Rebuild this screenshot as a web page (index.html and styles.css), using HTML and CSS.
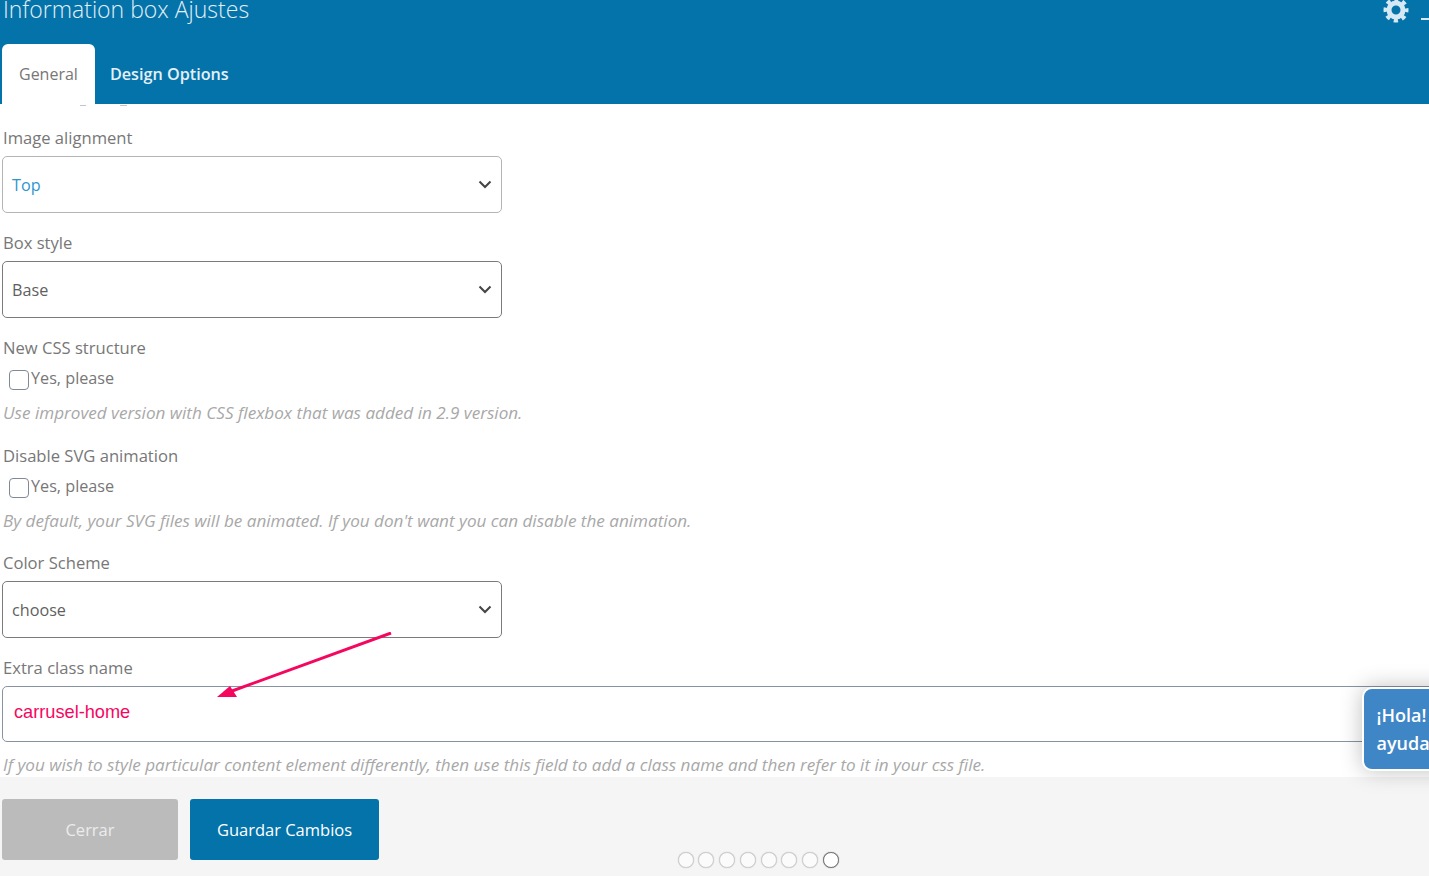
FILE: index.html
```html
<!DOCTYPE html>
<html lang="es">
<head>
<meta charset="utf-8">
<title>Information box Ajustes</title>
<link rel="stylesheet" href="styles.css">
</head>
<body>
<div class="panel">
  <header class="head">
    <div class="title-row">
      <h1 class="title">Information box Ajustes</h1>
      <div class="head-icons">
        <svg class="gear" width="26" height="26" viewBox="0 0 26 26"><circle cx="13" cy="13" r="7" fill="none" stroke="#d5e8f3" stroke-width="5"/><circle cx="13" cy="13" r="10.500" fill="none" stroke="#d5e8f3" stroke-width="4" stroke-dasharray="4.250 4" stroke-dashoffset="2.100"/></svg>
        <span class="minimize"></span>
      </div>
    </div>
    <nav class="tabs">
      <a class="tab tab-active">General</a>
      <a class="tab tab-plain">Design Options</a>
    </nav>
  </header>
  <main class="form">
    <div class="field">
      <label class="label">Image alignment</label>
      <div class="select select-blue"><span>Top</span><svg class="chev" width="14" height="9" viewBox="0 0 14 9"><path d="M1.500 1.500 7 7l5.500-5.500" fill="none" stroke="#444" stroke-width="2"/></svg></div>
    </div>
    <div class="field">
      <label class="label">Box style</label>
      <div class="select select-dark"><span>Base</span><svg class="chev" width="14" height="9" viewBox="0 0 14 9"><path d="M1.500 1.500 7 7l5.500-5.500" fill="none" stroke="#444" stroke-width="2"/></svg></div>
    </div>
    <div class="field">
      <label class="label">New CSS structure</label>
      <div class="check-row"><span class="check"></span><span>Yes, please</span></div>
      <p class="help">Use improved version with CSS flexbox that was added in 2.9 version.</p>
    </div>
    <div class="field">
      <label class="label">Disable SVG animation</label>
      <div class="check-row"><span class="check"></span><span>Yes, please</span></div>
      <p class="help">By default, your SVG files will be animated. If you don't want you can disable the animation.</p>
    </div>
    <div class="field">
      <label class="label">Color Scheme</label>
      <div class="select select-dark"><span>choose</span><svg class="chev" width="14" height="9" viewBox="0 0 14 9"><path d="M1.500 1.500 7 7l5.500-5.500" fill="none" stroke="#444" stroke-width="2"/></svg></div>
    </div>
    <div class="field field-last">
      <label class="label">Extra class name</label>
      <div class="text-input">carrusel-home</div>
      <p class="help">If you wish to style particular content element differently, then use this field to add a class name and then refer to it in your css file.</p>
    </div>
  </main>
  <footer class="foot">
    <button class="btn btn-close">Cerrar</button>
    <button class="btn btn-save">Guardar Cambios</button>
  </footer>
</div>
<svg class="arrow" width="190" height="80" viewBox="0 0 190 80"><path d="M175 1 16 59" stroke="#f5075f" stroke-width="3" fill="none"/><path d="M1 65 14 54 21 65z" fill="#f5075f"/></svg>
<div class="bubble"><div>¡Hola!</div><div>ayudar</div></div>
<div class="dots"><i class="dot"></i><i class="dot"></i><i class="dot"></i><i class="dot"></i><i class="dot"></i><i class="dot"></i><i class="dot"></i><i class="dot dot-on"></i></div>
</body>
</html>
```
FILE: styles.css
```css
html, body { margin: 0; padding: 0; height: 100%; overflow: hidden; background: #fff; }
body { font-family: "Open Sans", "Noto Sans", sans-serif; color: #777; font-size: 16px; }
.panel { display: flex; flex-direction: column; height: 876px; }
.head { background: #0473aa; height: 104px; flex: none; padding-left: 2px; display: flex; flex-direction: column; }
.title-row { display: flex; justify-content: space-between; height: 44px; }
.title { margin: -2px 0 0 1px; font-size: 23px; font-weight: 300; line-height: 22px; color: #e2eff6; white-space: nowrap; }
.head-icons { display: flex; align-items: flex-start; margin-top: -3px; }
.gear { margin-right: 12px; }
.minimize { width: 8px; height: 2px; background: #d5e8f3; margin-top: 21px; }
.tabs { display: flex; }
.tab { height: 60px; line-height: 61px; padding: 0 17px; font-size: 16px; color: #dcecf5; border-radius: 6px 6px 0 0; }
.tab-active { background: #fff; color: #777; }
.tab-plain { padding-left: 15px; font-size: 16.200px; font-weight: 600; color: #e4f0f7; }
.form { flex: 1; padding: 23px 0 0 2px; position: relative; }
.form::before, .form::after { content: ""; position: absolute; top: 1px; height: 1px; background: #c4c4c4; }
.form::before { left: 80px; width: 6px; }
.form::after { left: 120px; width: 7px; }
.field { margin-bottom: 19px; }
.field-last { margin-bottom: 0; }
.label { display: block; font-size: 16.600px; line-height: 22px; margin: 0 0 7px 1px; color: #777; white-space: nowrap; }
.select { width: 500px; height: 57px; box-sizing: border-box; border: 1px solid #b4b4b4; border-radius: 5px; display: flex; align-items: center; justify-content: space-between; padding: 0 9px 0 9px; color: #5f5f5f; font-size: 16.200px; }
.select-blue { color: #2f95cf; }
.select-dark { border-color: #7b7b7b; }
.check-row { display: flex; align-items: flex-start; padding-left: 7px; height: 24px; line-height: 20px; margin-top: 9px; color: #777; font-size: 16.200px; }
.check { width: 18px; height: 18px; border: 1px solid #7f8a96; border-radius: 4px; margin: 2px 2px 0 0; background: #fff; flex: none; }
.help { margin: 10px 0 20.500px 1px; font-style: italic; font-size: 17.100px; line-height: 22px; color: #a8a8a8; white-space: nowrap; }
.text-input { width: 1440px; height: 56px; box-sizing: border-box; border: 1px solid #8793a0; border-radius: 5px; padding: 0 11px; line-height: 50px; font-family: "Liberation Sans", Arial, sans-serif; font-size: 18.200px; color: #f5075f; }
.text-input + .help { margin: 12px 0 0 1px; }
.foot { flex: none; height: 99px; background: #f5f5f5; display: flex; align-items: flex-start; gap: 12px; padding: 22px 0 0 2px; box-sizing: border-box; }
.btn { height: 61px; border: 0; border-radius: 3px; font: 16.500px "Open Sans", "Noto Sans", sans-serif; color: #fff; }
.btn-close { width: 176px; background: #bbb; color: #ececec; }
.btn-save { width: 189px; background: #0473aa; }
.arrow { position: absolute; left: 216px; top: 632px; }
.bubble { position: absolute; left: 1362px; top: 687px; width: 100px; height: 84px; box-sizing: border-box; background: #3f86c6; border: 2px solid #fff; border-radius: 10px; box-shadow: 0 0 22px rgba(0,0,0,.25); color: #fff; font-size: 18px; font-weight: 600; line-height: 28px; padding: 12px 0 0 12.500px; white-space: nowrap; }
.dots { position: absolute; left: 677.500px; top: 852px; display: flex; gap: 4.800px; }
.dot { width: 16px; height: 16px; box-sizing: border-box; border-radius: 50%; border: 1px solid #cfcfcf; background: #fbfbfb; box-shadow: 0 0 1px #bbb; display: block; }
.dot-on { border: 1px solid #777; background: #fff; box-shadow: 0 0 1px #777; }
```
